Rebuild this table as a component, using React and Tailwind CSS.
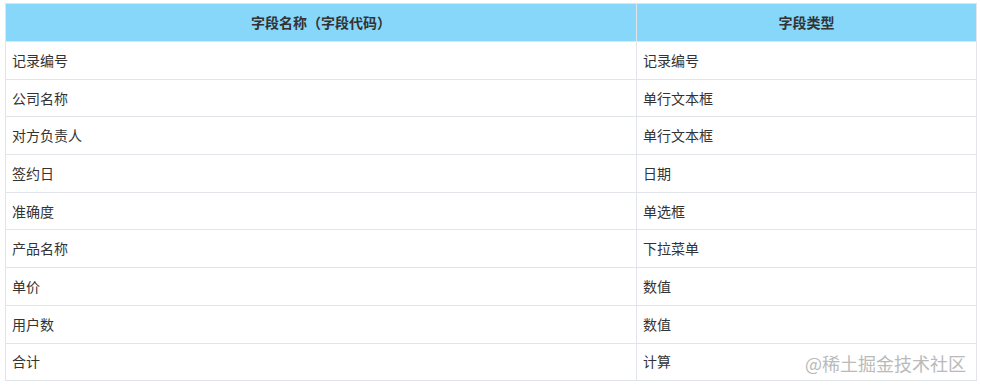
import React from "react";

const rows = [
  ["记录编号", "记录编号"],
  ["公司名称", "单行文本框"],
  ["对方负责人", "单行文本框"],
  ["签约日", "日期"],
  ["准确度", "单选框"],
  ["产品名称", "下拉菜单"],
  ["单价", "数值"],
  ["用户数", "数值"],
  ["合计", "计算"],
];

export default function App() {
  return (
    <div
      className="relative w-[981px] h-[386px] bg-white pt-[3px] pl-[5px]"
      style={{ fontFamily: '"Noto Sans CJK SC", "Liberation Sans", sans-serif' }}
    >
      <table className="w-[971px] border-collapse text-[14px] text-[#333] table-fixed">
        <colgroup>
          <col className="w-[631px]" />
          <col className="w-[340px]" />
        </colgroup>
        <thead>
          <tr className="bg-[#87d7fa] h-[38px]">
            <th className="border border-[#e1e4e8] font-bold text-center px-[6px]">字段名称（字段代码）</th>
            <th className="border border-[#e1e4e8] font-bold text-center px-[6px]">字段类型</th>
          </tr>
        </thead>
        <tbody>
          {rows.map(([a, b], i) => (
            <tr key={i} className="h-[37.7px]">
              <td className="border border-[#e1e4e8] px-[6px] text-left">{a}</td>
              <td className="border border-[#e1e4e8] px-[6px] text-left">{b}</td>
            </tr>
          ))}
        </tbody>
      </table>
      <div className="absolute left-[805px] top-[351px] text-[18px] leading-[24px] text-[#b3b3b3] opacity-90 whitespace-nowrap">
        @稀土掘金技术社区
      </div>
    </div>
  );
}
